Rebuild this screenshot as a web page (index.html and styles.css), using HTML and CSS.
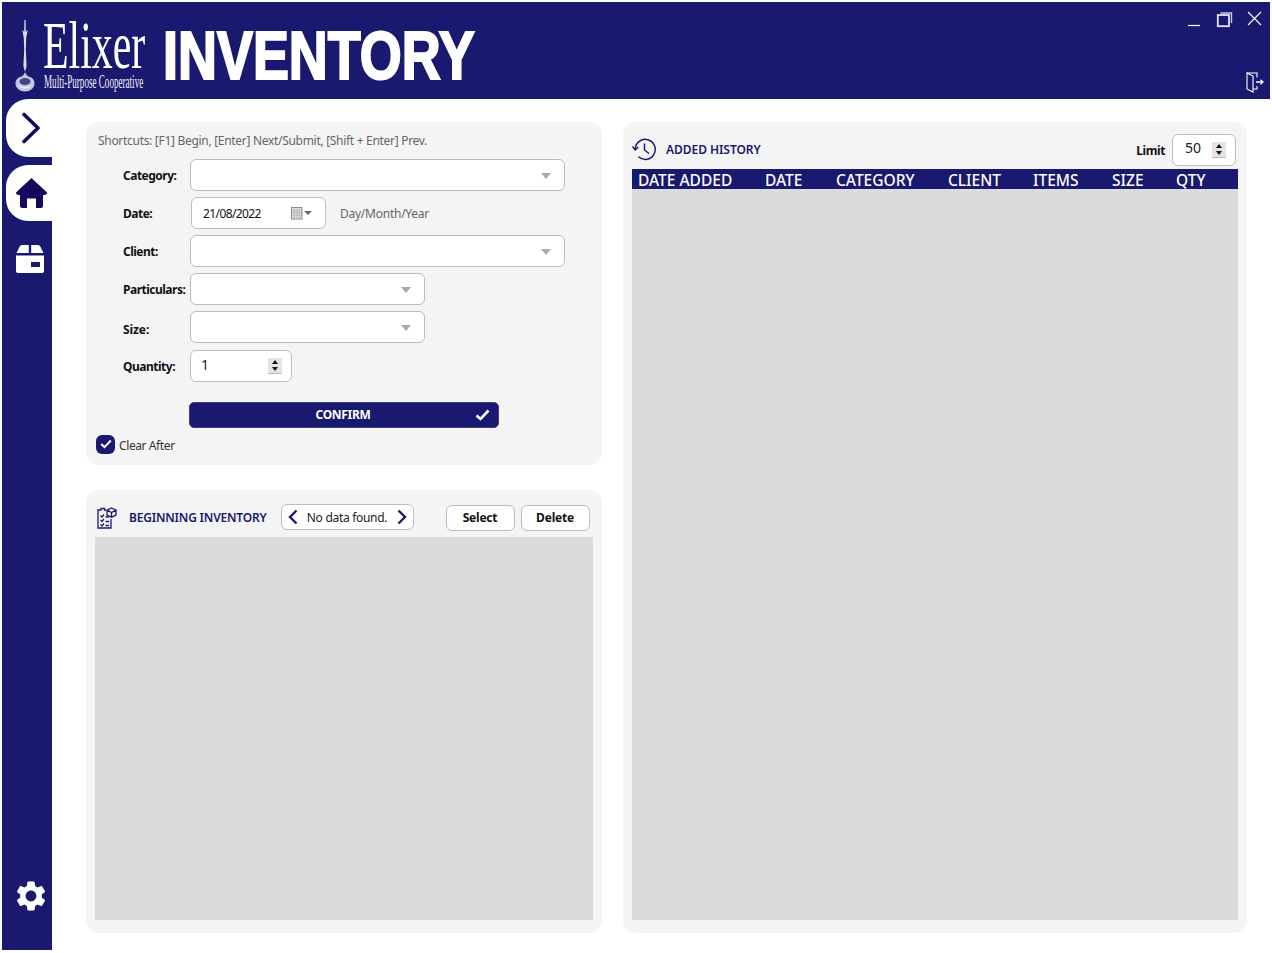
FILE: index.html
```html
<!DOCTYPE html>
<html lang="en">
<head>
<meta charset="utf-8">
<title>Elixer Inventory</title>
<link rel="stylesheet" href="styles.css">
</head>
<body>
<div class="app">
  <header class="topbar">
    <div class="brand">
      <svg class="logo-mark" width="20" height="72" viewBox="0 0 20 72">
        <path d="M9.4 0H10.6L10.8 12L12.8 9.5L11.2 18L10.8 30L11.6 46L10 52L8.4 46L9.2 30L8.8 18L7.2 9.5L9.2 12Z" fill="#dcdcee"/>
        <path d="M10 52C11 55 13 56.5 15 57C18 58 19.5 60.5 19.5 63.5C19.5 68 15 71.5 10 71.5C5 71.5 .5 68 .5 63.5C.5 60.5 2 58 5 57C7 56.5 9 55 10 52Z" fill="#c4c4dc"/>
        <ellipse cx="10" cy="61.5" rx="5.5" ry="3.5" fill="#45458c"/>
        <path d="M3 64C5 68 15 68 17 64C16 70 4 70 3 64Z" fill="#f4f4fb"/>
      </svg>
      <div class="wordmark">
        <span class="elixer">Elixer</span>
        <span class="coop">Multi-Purpose Cooperative</span>
      </div>
      <span class="title">INVENTORY</span>
    </div>
    <div class="topbar-right">
      <div class="winctl">
        <svg width="14" height="16" viewBox="0 0 14 16"><path d="M1 14.5H13" stroke="#fff" stroke-width="1.2"/></svg>
        <svg class="win-restore" width="17" height="17" viewBox="0 0 17 17" fill="none"><path d="M4.5 2H15.5V12" stroke="#c9c9e6" stroke-width="1.4"/><rect x="1.8" y="4" width="11.2" height="11.2" stroke="#e4e4f2" stroke-width="1.8"/></svg>
        <svg width="15" height="15" viewBox="0 0 15 15"><path d="M1 1L14 14M14 1L1 14" stroke="#fff" stroke-width="1.1"/></svg>
      </div>
      <svg class="door" width="18" height="21" viewBox="0 0 18 21" fill="none" stroke="#fff" stroke-width="1.1"><path d="M1 1H11V5.5M11 14V17H7"/><path d="M1 1V17L7 20V4L1 1Z"/><path d="M10 10H16.5M14.5 7.8L17 10L14.5 12.2" stroke-width="1.3"/></svg>
    </div>
  </header>
  <div class="body-row">
    <nav class="sidebar">
      <div class="tab tab-first">
        <svg width="20" height="32" viewBox="0 0 20 32" fill="none"><path d="M3 2.5L17 16L3 29.5" stroke="#15095f" stroke-width="3.6" stroke-linecap="round" stroke-linejoin="round"/></svg>
      </div>
      <div class="tab tab-second">
        <svg width="31" height="30" viewBox="0 0 31 30"><path d="M15.5 0L31 14.5C31 16 30 17 28.5 17H27V28C27 29.2 26 30 25 30H20V20.5H11V30H6C5 30 4 29.2 4 28V17H2.5C1 17 0 16 0 14.5Z" fill="#15095f"/></svg>
      </div>
      <div class="nav-item">
        <svg width="28" height="28" viewBox="0 0 28 28"><path d="M6 0H12.8V8H0.6L3.4 2C4 .8 5 0 6 0ZM15.2 0H22C23 0 24 .8 24.6 2L27.4 8H15.2Z" fill="#fff"/><path d="M0 10.4H28V26C28 27.2 27.2 28 26 28H2C.8 28 0 27.2 0 26ZM15 17V22H24V17Z" fill="#fff" fill-rule="evenodd"/></svg>
      </div>
      <div class="nav-spacer"></div>
      <div class="nav-gear">
        <svg width="36" height="36" viewBox="0 0 24 24"><path fill="#fff" d="M19.14 12.94c.04-.3.06-.61.06-.94 0-.32-.02-.64-.07-.94l2.03-1.58a.49.49 0 0 0 .12-.61l-1.92-3.32a.488.488 0 0 0-.59-.22l-2.39.96c-.5-.38-1.03-.7-1.62-.94l-.36-2.54a.484.484 0 0 0-.48-.41h-3.84c-.24 0-.43.17-.47.41l-.36 2.54c-.59.24-1.13.57-1.62.94l-2.39-.96c-.22-.08-.47 0-.59.22L2.74 8.87c-.12.21-.08.47.12.61l2.03 1.58c-.05.3-.09.63-.09.94s.02.64.07.94l-2.03 1.58a.49.49 0 0 0-.12.61l1.92 3.32c.12.22.37.29.59.22l2.39-.96c.5.38 1.03.7 1.62.94l.36 2.54c.05.24.24.41.48.41h3.84c.24 0 .44-.17.47-.41l.36-2.54c.59-.24 1.13-.56 1.62-.94l2.39.96c.22.08.47 0 .59-.22l1.92-3.32c.12-.22.07-.47-.12-.61l-2.01-1.58zM12 15.6c-1.98 0-3.6-1.62-3.6-3.6s1.62-3.6 3.6-3.6 3.6 1.62 3.6 3.6-1.62 3.6-3.6 3.6z"/></svg>
      </div>
    </nav>
    <main class="content">
      <div class="left-col">
        <section class="panel form-panel">
          <p class="hint">Shortcuts: [F1] Begin, [Enter] Next/Submit, [Shift + Enter] Prev.</p>
          <div class="form">
            <div class="row">
              <label class="lbl">Category:</label>
              <div class="field combo wide"><i class="caret"></i></div>
            </div>
            <div class="row">
              <label class="lbl">Date:</label>
              <div class="field date">
                <span>21/08/2022</span>
                <span class="cal">
                  <svg width="12" height="13" viewBox="0 0 12 13"><rect x=".5" y=".5" width="10.5" height="11.5" fill="#dedede" stroke="#8c8c8c"/><path d="M1 3H11M1 5.5H11M1 8H11M3.5 3V12M6 3V12M8.5 3V12" stroke="#a5a5a5" stroke-width=".6"/></svg>
                  <i class="cal-caret"></i>
                </span>
              </div>
              <span class="date-hint">Day/Month/Year</span>
            </div>
            <div class="row">
              <label class="lbl">Client:</label>
              <div class="field combo wide"><i class="caret"></i></div>
            </div>
            <div class="row">
              <label class="lbl">Particulars:</label>
              <div class="field combo mid"><i class="caret"></i></div>
            </div>
            <div class="row">
              <label class="lbl lbl-low">Size:</label>
              <div class="field combo mid"><i class="caret"></i></div>
            </div>
            <div class="row row-qty">
              <label class="lbl">Quantity:</label>
              <div class="field num qty">
                <span class="num-val">1</span>
                <span class="spin"><i class="up"></i><i class="down"></i></span>
              </div>
            </div>
          </div>
          <button class="confirm">
            <span>CONFIRM</span>
            <svg class="confirm-check" width="15" height="12" viewBox="0 0 15 12" fill="none"><path d="M1.5 6.5L5.5 10L13.5 1.5" stroke="#fff" stroke-width="2.6"/></svg>
          </button>
          <div class="clear">
            <span class="check"><svg width="12" height="10" viewBox="0 0 12 10" fill="none"><path d="M1.2 5L4.5 8.2L10.8 1.5" stroke="#fff" stroke-width="2"/></svg></span>
            <span>Clear After</span>
          </div>
        </section>
        <section class="panel begin-panel">
          <div class="begin-head">
            <svg width="20" height="22" viewBox="0 0 20 22" fill="none" stroke="#19196f" stroke-width="1.3"><path d="M9 3H7.5V1.5H4V3H1V21H14V12"/><path d="M3.5 8.5L5 10L7 7.5M3.5 13L5 14.5L7 12M3.5 17.5L5 19L7 16.5M8.5 10H12M8.5 14.5H12M8.5 18.5H12"/><path d="M14.5 1L19 3.2V8L14.5 10.2L10 8V3.2ZM10 3.2L14.5 5.5L19 3.2M14.5 5.5V10.2"/></svg>
            <h2 class="head-title begin-title">BEGINNING INVENTORY</h2>
            <div class="pager">
              <svg width="10" height="16" viewBox="0 0 10 16" fill="none"><path d="M8.5 1.5L2 8L8.5 14.5" stroke="#19196f" stroke-width="2.4"/></svg>
              <span>No data found.</span>
              <svg width="10" height="16" viewBox="0 0 10 16" fill="none"><path d="M1.5 1.5L8 8L1.5 14.5" stroke="#19196f" stroke-width="2.4"/></svg>
            </div>
            <button class="btn btn-select">Select</button>
            <button class="btn">Delete</button>
          </div>
          <div class="grey begin-grey"></div>
        </section>
      </div>
      <section class="panel history-panel">
        <div class="history-head">
          <svg width="24" height="23" viewBox="0 0 24 23" fill="none" stroke="#19196f" stroke-width="1.5"><path d="M3.2 11.5A10 10 0 1 1 6.5 18.8"/><path d="M0.5 8.5L3.2 12L6.3 9"/><path d="M12.5 5.5V12L17 15.5"/></svg>
          <h2 class="head-title">ADDED HISTORY</h2>
          <span class="limit-lbl">Limit</span>
          <div class="field num limit">
            <span class="num-val">50</span>
            <span class="spin"><i class="up"></i><i class="down"></i></span>
          </div>
        </div>
        <div class="thead">
          <span>DATE ADDED</span><span>DATE</span><span>CATEGORY</span><span>CLIENT</span><span>ITEMS</span><span>SIZE</span><span>QTY</span>
        </div>
        <div class="grey history-grey"></div>
      </section>
    </main>
  </div>
</div>
</body>
</html>
```
FILE: styles.css
```css
* { box-sizing: border-box; }
html, body { height: 100%; }
body {
  margin: 0;
  padding: 2px 2px 3px;
  background: #fff;
  font-family: "Noto Sans", "Open Sans", sans-serif;
  font-size: 12px;
  color: #111;
  overflow: hidden;
}
.app { height: 948px; display: flex; flex-direction: column; }

.topbar {
  height: 97px;
  flex: none;
  background: #19196f;
  display: flex;
  justify-content: space-between;
  color: #fff;
}
.brand { display: flex; align-items: flex-start; padding: 18px 0 0 13px; }
.logo-mark { flex: none; }
.wordmark { width: 120px; margin-left: 8px; display: flex; flex-direction: column; }
.elixer {
  display: block;
  font-family: "Liberation Serif", serif;
  font-size: 67px;
  line-height: 50px;
  height: 52px;
  white-space: nowrap;
  transform: scaleX(.625);
  transform-origin: left top;
}
.coop {
  display: block;
  margin-left: 1px;
  font-family: "Liberation Serif", serif;
  font-size: 18px;
  line-height: 20px;
  white-space: nowrap;
  transform: scaleX(.505);
  transform-origin: left top;
  color: #f0f0f8;
}
.title {
  font-family: "Liberation Sans", sans-serif;
  font-weight: 700;
  font-size: 68px;
  line-height: 74px;
  margin-top: -2px;
  white-space: nowrap;
  -webkit-text-stroke: 2.2px #fff;
  transform: scaleX(.793);
  transform-origin: left top;
}
.topbar-right { display: flex; flex-direction: column; align-items: flex-end; padding: 9px 8px 0 0; }
.winctl { display: flex; align-items: flex-start; gap: 15px; }
.win-restore { margin-right: -1px; }
.door { margin-top: 44px; margin-right: -2px; }

.body-row { flex: 1; display: flex; min-height: 0; }
.sidebar { width: 50px; flex: none; background: #19196f; display: flex; flex-direction: column; align-items: flex-end; }
.tab { width: 46px; background: #fff; border-radius: 22px 0 0 22px; display: flex; align-items: center; justify-content: flex-end; }
.tab-first { height: 58px; margin-bottom: 8px; padding-right: 11px; }
.tab-second { height: 56px; padding-right: 5px; }
.nav-item { width: 50px; display: flex; justify-content: center; padding: 24px 0 0 6px; }
.nav-spacer { flex: 1; }
.nav-gear { width: 50px; display: flex; justify-content: center; padding: 0 0 36px 8px; }

.content { flex: 1; display: grid; grid-template-columns: 516px 624px; gap: 21px; padding: 23px 0 17px 34px; min-width: 0; }
.left-col { display: flex; flex-direction: column; gap: 25px; min-height: 0; }
.panel { background: #f4f4f4; border-radius: 13px; }

.form-panel { height: 343px; flex: none; padding: 12px 0 0 12px; }
.hint { margin: 0; font-size: 12px; line-height: 14px; color: #666; height: 25px; white-space: nowrap; letter-spacing: -.3px; }
.form { display: flex; flex-direction: column; gap: 6px; padding-left: 25px; }
.row { display: flex; align-items: center; height: 32px; }
.lbl { width: 67px; font-weight: 700; font-size: 12px; color: #111; letter-spacing: -.5px; white-space: nowrap; }
.lbl-low { margin-top: 4px; letter-spacing: -.1px; }
.field { height: 32px; background: #fff; border: 1px solid #bcbcbc; border-radius: 6px; display: flex; align-items: center; position: relative; }
.wide { width: 375px; }
.mid { width: 235px; }
.caret { position: absolute; right: 13px; top: 13px; border-left: 5px solid transparent; border-right: 5px solid transparent; border-top: 6px solid #a9a9a9; }
.date { width: 135px; margin-left: 1px; padding: 0 13px 0 11px; justify-content: space-between; font-size: 12px; letter-spacing: -.6px; }
.cal { display: flex; align-items: center; gap: 1px; }
.cal-caret { border-left: 4px solid transparent; border-right: 4px solid transparent; border-top: 4px solid #5c6a80; }
.date-hint { margin-left: 14px; color: #666; font-size: 12px; letter-spacing: -.25px; }
.row-qty { margin-top: 1px; }
.qty { width: 102px; }
.num { justify-content: space-between; padding: 0 9px 0 10px; font-size: 14px; }
.num-val { color: #222; line-height: 28px; margin-top: -2px; }
.spin { width: 14px; height: 16px; background: #e4e4e4; display: flex; flex-direction: column; align-items: center; justify-content: space-between; padding: 2px 0; border-bottom: 1px solid #bbb; }
.up { border-left: 3px solid transparent; border-right: 3px solid transparent; border-bottom: 4px solid #111; }
.down { border-left: 3px solid transparent; border-right: 3px solid transparent; border-top: 4px solid #111; }
.confirm {
  display: block;
  position: relative;
  width: 310px;
  height: 26px;
  margin: 20px 0 0 91px;
  background: #19196f;
  border: 1px solid #3c3c88;
  border-radius: 5px;
  color: #fff;
  font-family: inherit;
  font-size: 12px;
  font-weight: 700;
  letter-spacing: -.3px;
  padding: 0 2px 2px 0;
}
.confirm-check { position: absolute; right: 8px; top: 6px; }
.clear { display: flex; align-items: center; gap: 3px; margin: 9px 0 0 -1px; color: #333; font-size: 12px; letter-spacing: -.4px; }
.check { width: 19px; height: 19px; margin: -3px 1px 0 -1px; background: #19196f; border-radius: 6px; display: flex; align-items: center; justify-content: center; }

.begin-panel { flex: 1; min-height: 0; padding: 14px 9px 13px; display: flex; flex-direction: column; }
.begin-head { height: 33px; display: flex; align-items: flex-start; flex: none; }
.begin-head > svg:first-child { margin: 3px 0 0 2px; flex: none; }
.head-title { margin: 0; font-size: 12px; font-weight: 600; color: #19196f; letter-spacing: -.2px; white-space: nowrap; line-height: 18px; }
.begin-title { margin: 5px 0 0 12px; }
.pager { width: 133px; height: 26px; margin-left: 14px; background: #fff; border: 1px solid #bcbcbc; border-radius: 6px; display: flex; align-items: center; justify-content: space-between; padding: 0 6px; font-size: 12px; color: #222; letter-spacing: -.3px; }
.btn { width: 69px; height: 26px; margin-top: 1px; margin-left: 6px; background: #fff; border: 1px solid #bcbcbc; border-radius: 6px; font-family: inherit; font-size: 12px; font-weight: 700; color: #111; padding: 0 0 1px; letter-spacing: -.2px; }
.btn-select { margin-left: 32px; }
.grey { background: #dbdbdb; }
.begin-grey { flex: 1; }

.history-panel { padding: 11px 9px 13px; display: flex; flex-direction: column; min-height: 0; }
.history-head { height: 36px; display: flex; align-items: center; flex: none; }
.history-head > svg:first-child { margin-top: -4px; }
.history-head .head-title { margin: -2px 0 0 10px; letter-spacing: -.05px; }
.limit-lbl { margin-left: auto; font-weight: 700; font-size: 12px; letter-spacing: -.4px; margin-right: 7px; margin-top: -1px; }
.limit { width: 64px; margin-right: 2px; margin-top: -3px; padding-left: 13px; }
.limit .num-val { margin-left: -1px; margin-top: -3px; }
.thead {
  flex: none;
  height: 20px;
  background: #19196f;
  color: #fff;
  font-size: 15.5px;
  font-weight: 500;
  line-height: 17px;
  padding: 3px 0 0 6px;
  display: grid;
  grid-template-columns: 127px 71px 112px 85px 79px 64px 1fr;
  white-space: nowrap;
}
.history-grey { flex: 1; }
```
